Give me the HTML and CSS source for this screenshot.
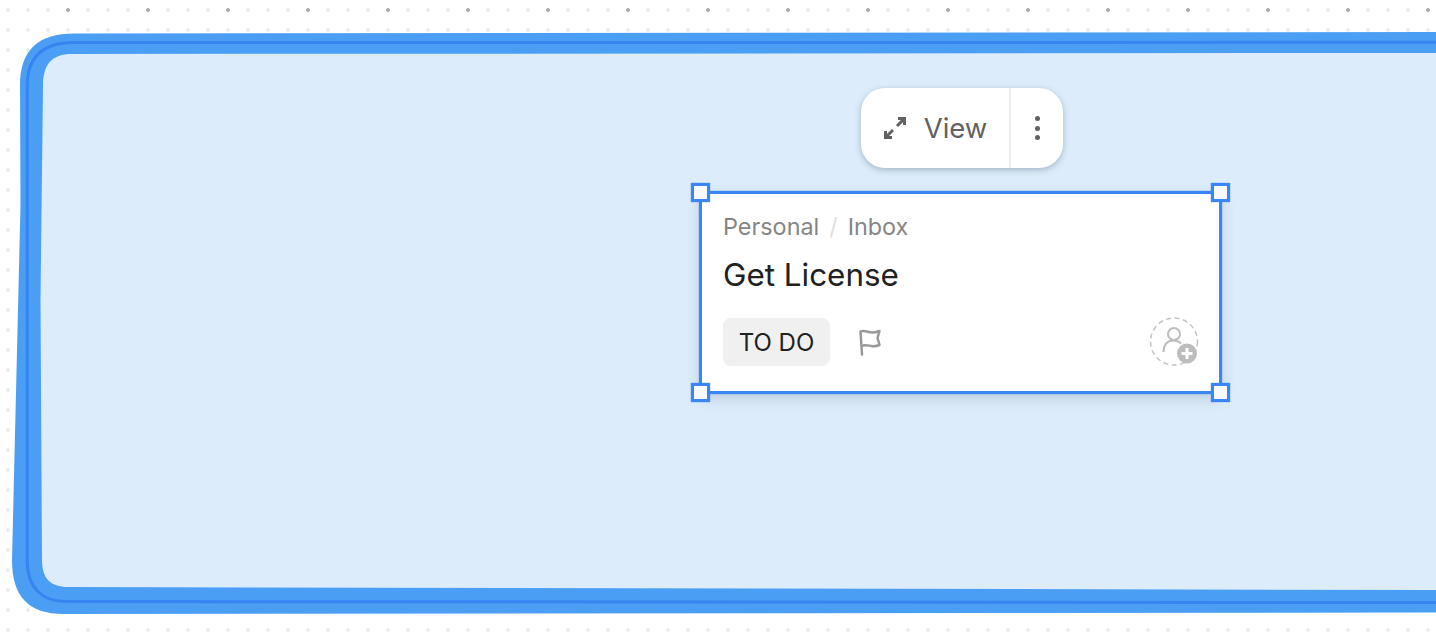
FILE: index.html
```html
<!DOCTYPE html>
<html lang="en">
<head>
  <meta charset="UTF-8" />
  <title>Whiteboard</title>
  <link rel="stylesheet" href="styles.css">
</head>
<body>
  <div class="board">
    <svg class="frame" width="1436" height="632" viewBox="0 0 1436 632">
      <path class="frame-outer" d="M1436 32 L74 33.500 C38 33.500 20 50 20 86 L20.500 205 L12 560 C12 596 28 614 64 614 L1436 612.500 Z"/>
      <path class="frame-line" d="M1436 42.300 L74 42.600 C44 42.600 27.200 56 27.200 86 L27.200 560 C27.200 588 42 601.500 66 601.500 L1436 602.500"/>
      <path class="frame-inner" d="M1436 53 L72 54 C52 54 43 64 43 86 L40.500 300 L42 560 C42 578 50 587 68 587 L1436 590 Z"/>
    </svg>

    <div class="toolbar">
      <button class="view-btn">
        <svg class="icon-expand" width="24" height="24" viewBox="0 0 24 24">
          <path d="M15 2.500h6.500V9M21 3l-7 7M2.500 15v6.500H9M3 21l7-7"/>
        </svg>
        <span>View</span>
      </button>
      <button class="more-btn">
        <span class="dot"></span>
        <span class="dot"></span>
        <span class="dot"></span>
      </button>
    </div>

    <div class="card">
      <span class="handle handle-tl"></span>
      <span class="handle handle-tr"></span>
      <span class="handle handle-bl"></span>
      <span class="handle handle-br"></span>

      <div class="crumbs">
        <span>Personal</span>
        <span class="crumb-sep">/</span>
        <span>Inbox</span>
      </div>
      <div class="card-title">Get License</div>
      <div class="card-footer">
        <div class="status">TO DO</div>
        <svg class="icon-flag" width="26" height="30" viewBox="0 0 26 30">
          <path d="M5 27.500L3.500 4.500C8 3 11 5.500 15 5.500c2.500 0 5-.5 7.500-1.500l-2 7 2 7c-3 1.200-5.500 1.500-8 1-3-.5-6-1.500-8.500-.5"/>
        </svg>
        <svg class="icon-assign" width="50" height="50" viewBox="0 0 50 50">
          <circle class="assign-ring" cx="25" cy="24.500" r="23.500"/>
          <circle class="assign-line" cx="25" cy="17" r="6"/>
          <path class="assign-line" d="M14.500 35c0-7.500 4-11.500 10-11.500 3 0 5.500 1 7.500 3"/>
          <circle class="assign-badge" cx="38" cy="36.500" r="10"/>
          <path class="assign-plus" d="M38 31v11M32.500 36.500h11"/>
        </svg>
      </div>
    </div>
  </div>
</body>
</html>
```

FILE: styles.css
```css
* {
  margin: 0;
  padding: 0;
  box-sizing: border-box;
}

body {
  background-color: #ffffff;
  font-family: Inter, 'Liberation Sans', sans-serif;
  overflow: hidden;
}

.board {
  position: relative;
  width: 1436px;
  height: 632px;
  overflow: hidden;
  background-image:
    radial-gradient(circle at 68px 10px, #a8a8a8 0, #a8a8a8 1.5px, transparent 2.2px),
    radial-gradient(circle at 8px 10px, #ececec 0, #ececec 1.5px, transparent 2.2px);
  background-size: 80px 640px, 20px 20px;
}

.frame {
  position: absolute;
  left: 0;
  top: 0;
}

.frame-outer {
  fill: #4a9ff5;
}

.frame-line {
  fill: none;
  stroke: #3584f0;
  stroke-width: 3;
}

.frame-inner {
  fill: #dcecfa;
}

/* barra acima do card */
.toolbar {
  position: absolute;
  left: 861px;
  top: 88px;
  width: 202px;
  height: 80px;
  display: flex;
  background-color: #ffffff;
  border-radius: 24px;
  box-shadow: 0 2px 6px rgba(60, 80, 110, 0.35);
}

.toolbar button {
  background-color: transparent;
  border: none;
  cursor: pointer;
  display: flex;
  align-items: center;
  justify-content: center;
}

.view-btn {
  width: 150px;
  gap: 17px;
  border-right: 2px solid #eeeeee !important;
  color: #616161;
  font-family: inherit;
  font-size: 27.5px;
}

.icon-expand path {
  fill: none;
  stroke: #616161;
  stroke-width: 3;
}

.more-btn {
  flex: 1;
  flex-direction: column;
  gap: 4.5px;
}

.dot {
  width: 5px;
  height: 5px;
  border-radius: 50%;
  background-color: #616161;
}

.card {
  position: absolute;
  left: 699px;
  top: 191px;
  width: 523px;
  height: 203px;
  padding: 19px 20px 0 21px;
  background-color: #ffffff;
  border: 3px solid #3a86f5;
  box-shadow: 0 0 1px #3a86f5, 0 5px 12px rgba(60, 80, 110, 0.18);
}

.handle {
  position: absolute;
  width: 19px;
  height: 19px;
  background-color: #f7f9fc;
  border: 3px solid #3a86f5;
  box-shadow: 0 0 1px #3a86f5;
}

.handle-tl { left: -11px; top: -11px; }
.handle-tr { right: -11px; top: -11px; }
.handle-bl { left: -11px; bottom: -11px; }
.handle-br { right: -11px; bottom: -11px; }

.crumbs {
  display: flex;
  gap: 10px;
  font-size: 23.4px;
  line-height: 28px;
  color: #858585;
}

.crumb-sep {
  color: #e0e0e0;
}

.card-title {
  margin-top: 15px;
  font-size: 31.4px;
  line-height: 38px;
  font-weight: 400;
  color: #212121;
}

.card-footer {
  margin-top: 23px;
  display: flex;
  align-items: center;
}

.status {
  width: 107px;
  height: 48px;
  display: flex;
  align-items: center;
  justify-content: center;
  background-color: #f0f0f0;
  border-radius: 8px;
  color: #212121;
  font-size: 24px;
  font-weight: 400;
}

.icon-flag {
  margin-left: 27px;
}

.icon-flag path {
  fill: none;
  stroke: #999999;
  stroke-width: 2.5;
  stroke-linejoin: round;
  stroke-linecap: round;
}

.icon-assign {
  margin-left: auto;
}

.assign-ring {
  fill: none;
  stroke: #c4c4c4;
  stroke-width: 1.5;
  stroke-dasharray: 5 3.5;
}

.assign-line {
  fill: none;
  stroke: #bdbdbd;
  stroke-width: 2;
}

.assign-badge {
  fill: #bdbdbd;
}

.assign-plus {
  stroke: #ffffff;
  stroke-width: 3;
}
```
